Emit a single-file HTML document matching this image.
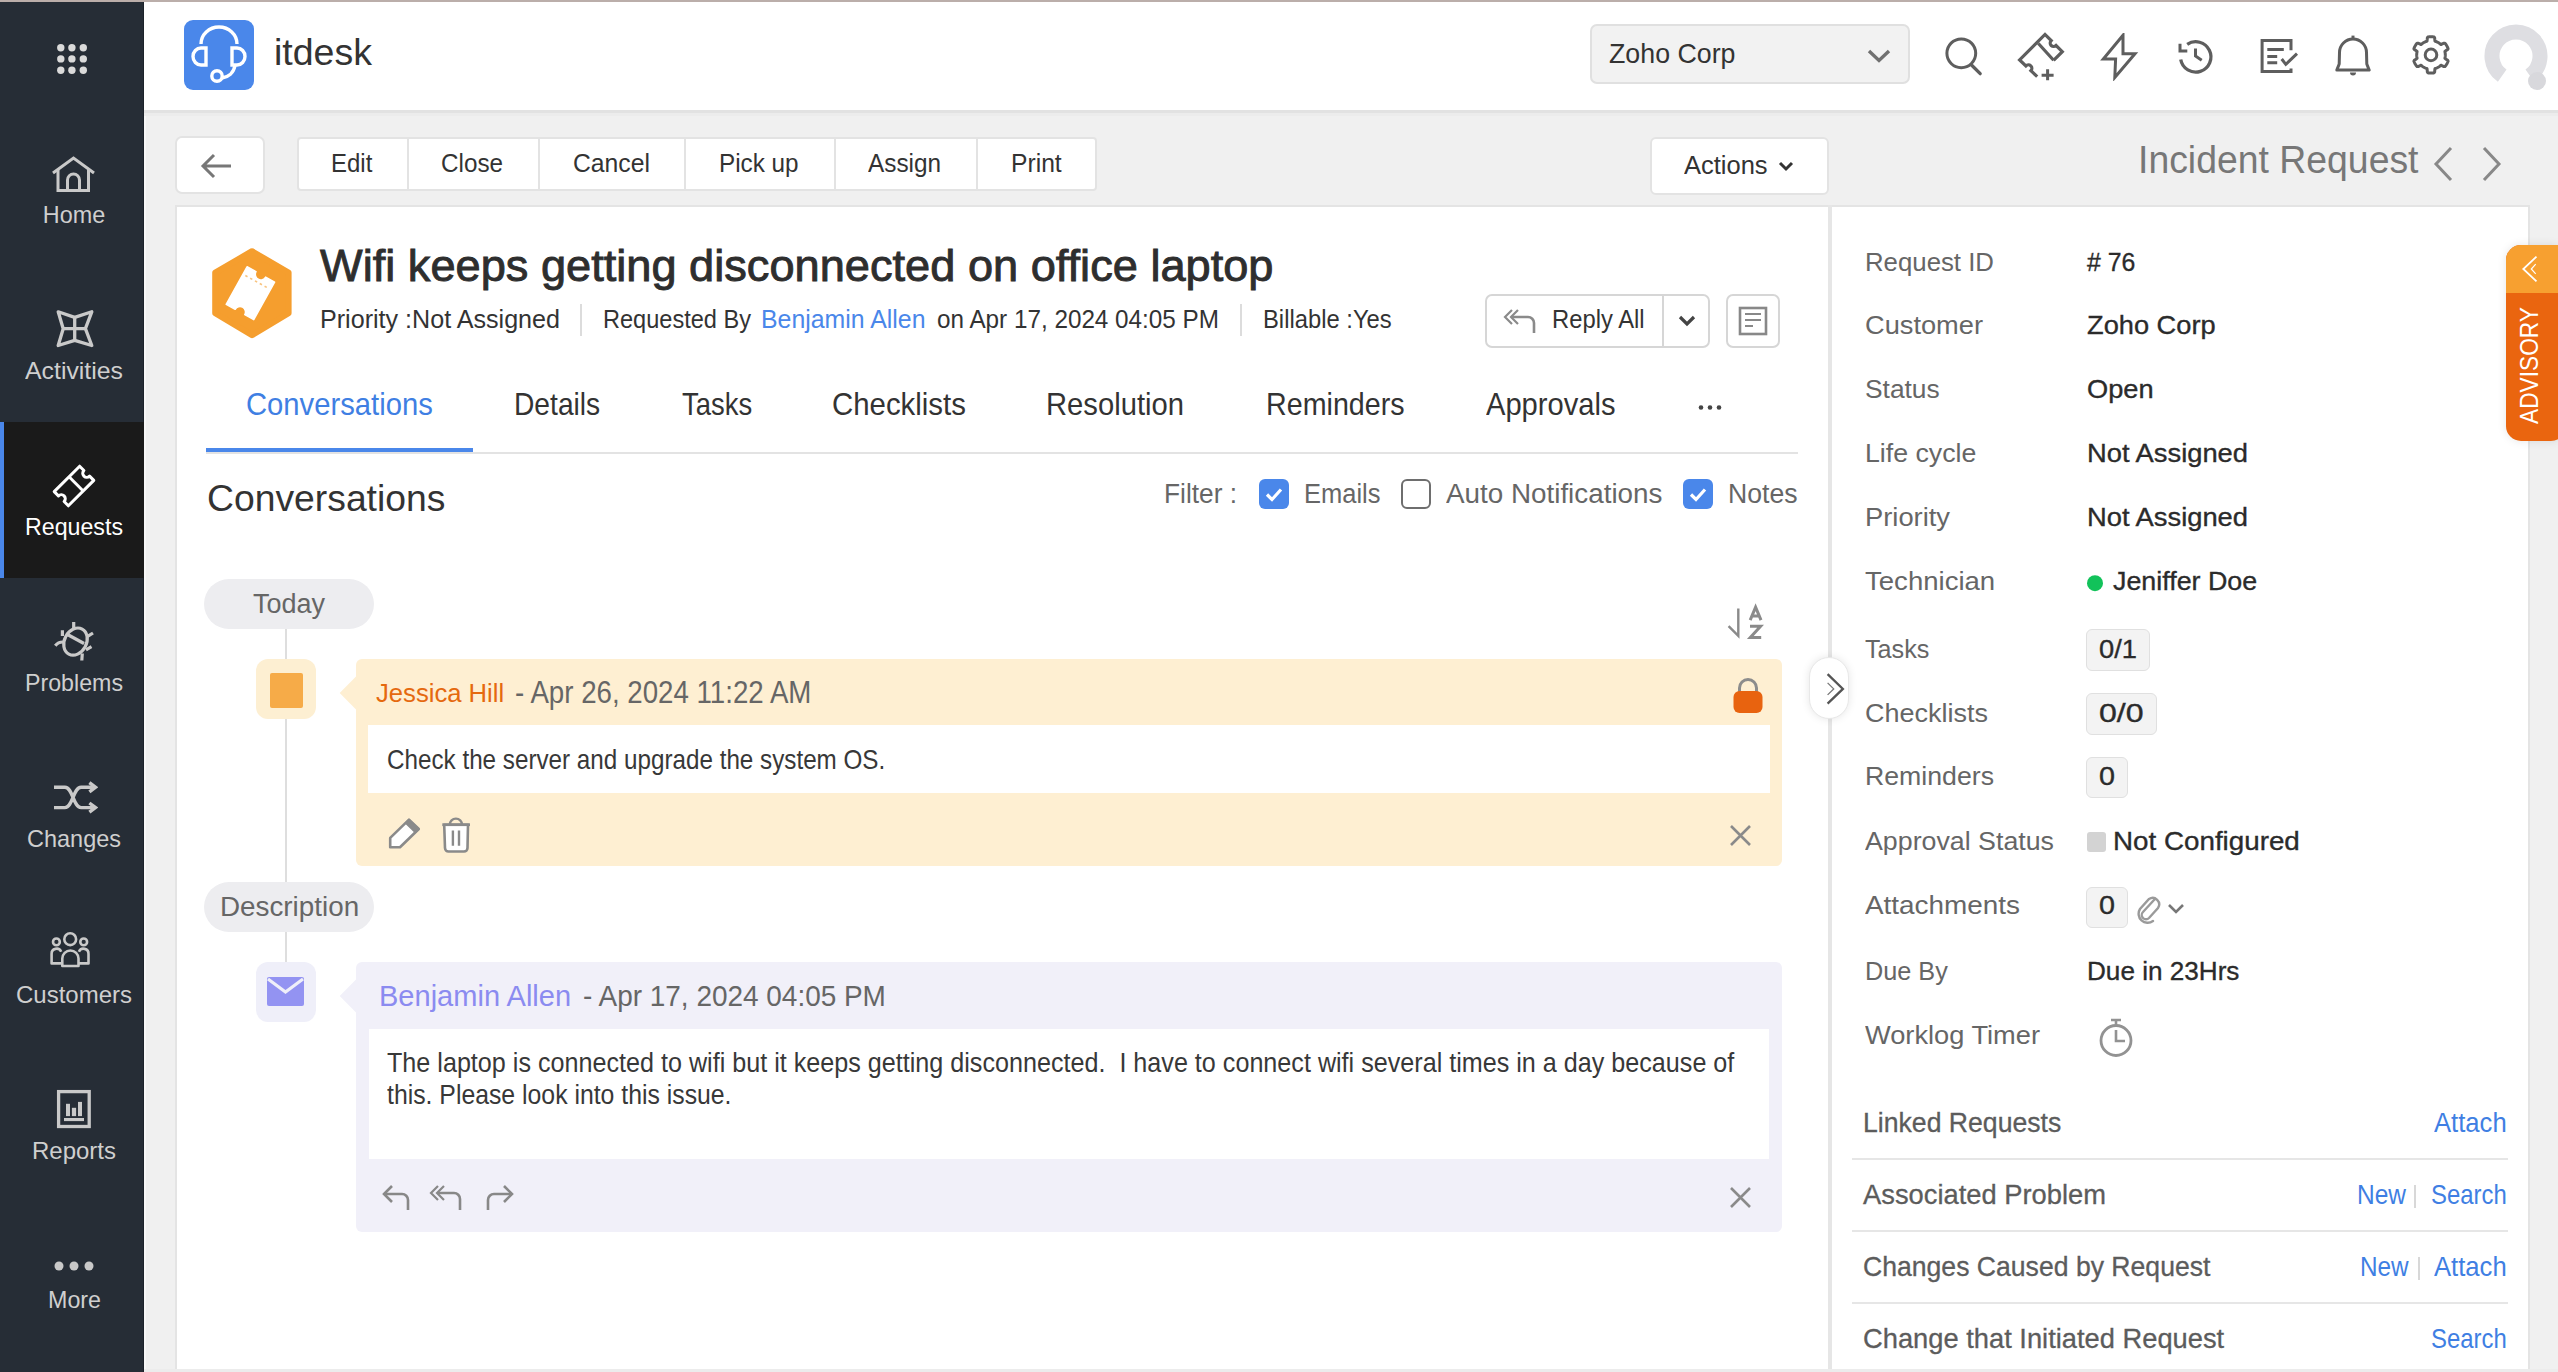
<!DOCTYPE html>
<html><head><meta charset="utf-8"><title>itdesk</title>
<style>
html,body{margin:0;padding:0;}
body{width:2558px;height:1372px;overflow:hidden;position:relative;background:#f0f0f0;font-family:"Liberation Sans",sans-serif;}
.t{position:absolute;white-space:nowrap;}
.r{position:absolute;box-sizing:border-box;}
</style></head><body>
<div class="r" style="left:0px;top:0px;width:144px;height:1372px;background:#262d36;border-radius:0px;"></div>
<div class="r" style="left:143px;top:0px;width:1px;height:1372px;background:#1c222a;border-radius:0px;"></div>
<div class="r" style="left:144px;top:110px;width:2px;height:1262px;background:#f7f7f7;border-radius:0px;"></div>
<div class="r" style="left:144px;top:0px;width:2414px;height:110px;background:#ffffff;border-radius:0px;"></div>
<div class="r" style="left:144px;top:110px;width:2414px;height:3px;background:#e2e2e2;border-radius:0px;"></div>
<div class="r" style="left:144px;top:113px;width:2414px;height:3px;background:#ececec;border-radius:0px;"></div>
<div class="r" style="left:0px;top:0px;width:2558px;height:2px;background:#bbaeaa;border-radius:0px;"></div>
<svg class="r" style="left:0px;top:0px;" width="144" height="100" viewBox="0 0 144 100"><circle cx="60.8" cy="47.7" r="3.7" fill="#dadada"/><circle cx="60.8" cy="58.9" r="3.7" fill="#dadada"/><circle cx="60.8" cy="70.2" r="3.7" fill="#dadada"/><circle cx="71.9" cy="47.7" r="3.7" fill="#dadada"/><circle cx="71.9" cy="58.9" r="3.7" fill="#dadada"/><circle cx="71.9" cy="70.2" r="3.7" fill="#dadada"/><circle cx="83.3" cy="47.7" r="3.7" fill="#dadada"/><circle cx="83.3" cy="58.9" r="3.7" fill="#dadada"/><circle cx="83.3" cy="70.2" r="3.7" fill="#dadada"/></svg>
<div class="r" style="left:0px;top:422px;width:144px;height:156px;background:#1a1a1a;border-radius:0px;"></div>
<div class="r" style="left:0px;top:422px;width:4px;height:156px;background:#4a87ea;border-radius:0px;"></div>
<div class="t" id="t0" style="left:42.80px;top:204.11px;font-size:23.4px;line-height:23.4px;color:#cfcfcf;font-weight:400;font-family:'Liberation Sans',sans-serif;transform-origin:left top;">Home</div>
<div class="t" id="t1" style="left:25.00px;top:360.11px;font-size:23.4px;line-height:23.4px;color:#cfcfcf;font-weight:400;font-family:'Liberation Sans',sans-serif;transform:scaleX(1.0618);transform-origin:left top;">Activities</div>
<div class="t" id="t2" style="left:25.00px;top:516.11px;font-size:23.4px;line-height:23.4px;color:#ffffff;font-weight:400;font-family:'Liberation Sans',sans-serif;transform:scaleX(0.9916);transform-origin:left top;">Requests</div>
<div class="t" id="t3" style="left:25.00px;top:672.11px;font-size:23.4px;line-height:23.4px;color:#cfcfcf;font-weight:400;font-family:'Liberation Sans',sans-serif;transform:scaleX(0.9919);transform-origin:left top;">Problems</div>
<div class="t" id="t4" style="left:27.00px;top:828.11px;font-size:23.4px;line-height:23.4px;color:#cfcfcf;font-weight:400;font-family:'Liberation Sans',sans-serif;transform:scaleX(1.0038);transform-origin:left top;">Changes</div>
<div class="t" id="t5" style="left:16.00px;top:984.11px;font-size:23.4px;line-height:23.4px;color:#cfcfcf;font-weight:400;font-family:'Liberation Sans',sans-serif;transform:scaleX(1.0257);transform-origin:left top;">Customers</div>
<div class="t" id="t6" style="left:32.00px;top:1140.11px;font-size:23.4px;line-height:23.4px;color:#cfcfcf;font-weight:400;font-family:'Liberation Sans',sans-serif;transform:scaleX(1.0256);transform-origin:left top;">Reports</div>
<div class="t" id="t7" style="left:47.50px;top:1289.11px;font-size:23.4px;line-height:23.4px;color:#cfcfcf;font-weight:400;font-family:'Liberation Sans',sans-serif;transform:scaleX(0.9944);transform-origin:left top;">More</div>
<svg class="r" style="left:50px;top:152px;" width="48" height="44" viewBox="0 0 48 44"><path d="M3 21 L23.5 6 L44 21" fill="none" stroke="#c9c9c9" stroke-width="3"/><path d="M8 17 V38.5 H38.5 V17" fill="none" stroke="#c9c9c9" stroke-width="3"/><path d="M17.5 38.5 V28 a6 6 0 0 1 12 0 V38.5" fill="none" stroke="#c9c9c9" stroke-width="3"/></svg>
<svg class="r" style="left:50px;top:305px;" width="48" height="46" viewBox="0 0 48 46"><path d="M8.2 6.8 L24.7 12.4 L41.8 6.8 L35.4 23.7 L41.8 40.5 L24.7 35.4 L8.2 40.5 L13.2 23.7 Z" fill="none" stroke="#c9c9c9" stroke-width="3.3" stroke-linejoin="round"/><path d="M13.2 23.7 H35.4 M24.7 12.4 V35.4" stroke="#c9c9c9" stroke-width="3.3"/></svg>
<svg class="r" style="left:50px;top:462px;" width="48" height="48" viewBox="0 0 48 48"><g transform="rotate(-45 24 24)"><path d="M6 14 H42 V20 a4 4 0 0 0 0 8 V34 H6 V28 a4 4 0 0 0 0 -8 Z" fill="none" stroke="#ffffff" stroke-width="3" stroke-linejoin="round"/><path d="M27 14 V34" stroke="#ffffff" stroke-width="3"/></g></svg>
<svg class="r" style="left:50px;top:618px;" width="48" height="46" viewBox="0 0 48 46"><ellipse cx="25.5" cy="23.6" rx="11" ry="14.2" transform="rotate(28 25.5 23.6)" fill="none" stroke="#c9c9c9" stroke-width="3.2"/><path d="M17.5 16.5 L34 25.5" stroke="#c9c9c9" stroke-width="3.2"/><path d="M23.7 4 V10.5 M12.4 12.2 V18 M5.3 27.7 Q8 24 13 24 M43 15 L37.2 18.7 M41.5 28.7 L36 31.8 M31.8 42.5 L32.3 35.5" fill="none" stroke="#c9c9c9" stroke-width="3.2"/></svg>
<svg class="r" style="left:50px;top:780px;" width="48" height="36" viewBox="0 0 48 36"><path d="M4 7.3 H14.9 C23 7.3 23 27.6 31.1 27.6 H44 M4 27.6 H14.9 C23 27.6 23 7.3 31.1 7.3 H44" fill="none" stroke="#c9c9c9" stroke-width="3.4"/><path d="M39.4 2.7 L45.5 7.3 L39.4 11.9 M39.4 23 L45.5 27.6 L39.4 32.2" fill="none" stroke="#c9c9c9" stroke-width="3.4"/></svg>
<svg class="r" style="left:40px;top:920px;" width="60" height="60" viewBox="0 0 60 60"><circle cx="30.2" cy="19.2" r="5.9" fill="none" stroke="#c9c9c9" stroke-width="2.6"/><circle cx="16.4" cy="21.9" r="3.4" fill="none" stroke="#c9c9c9" stroke-width="2.6"/><circle cx="43.7" cy="21.9" r="3.4" fill="none" stroke="#c9c9c9" stroke-width="2.6"/><path d="M22.3 46 V38.6 a8.1 8.1 0 0 1 16.2 0 V46 Z" fill="none" stroke="#c9c9c9" stroke-width="2.6" stroke-linejoin="round"/><path d="M22 43.4 H11.6 V34 a5 5 0 0 1 9.6 -2.2 M38.8 43.4 H48.5 V34 a5 5 0 0 0 -9.6 -2.2" fill="none" stroke="#c9c9c9" stroke-width="2.6" stroke-linejoin="round"/></svg>
<svg class="r" style="left:50px;top:1080px;" width="50" height="50" viewBox="0 0 50 50"><rect x="8.6" y="11.6" width="30.6" height="34.9" fill="none" stroke="#c9c9c9" stroke-width="3.3"/><rect x="16" y="23.8" width="4" height="12.3" fill="#c9c9c9"/><rect x="21.9" y="27.8" width="4.2" height="8.3" fill="#c9c9c9"/><rect x="28" y="21.9" width="4" height="14.2" fill="#c9c9c9"/><rect x="14" y="38" width="20" height="3.1" fill="#c9c9c9"/></svg>
<svg class="r" style="left:50px;top:1256px;" width="48" height="20" viewBox="0 0 48 20"><circle cx="9" cy="10" r="4.5" fill="#c9c9c9"/><circle cx="24" cy="10" r="4.5" fill="#c9c9c9"/><circle cx="39" cy="10" r="4.5" fill="#c9c9c9"/></svg>
<div class="r" style="left:184px;top:20px;width:70px;height:70px;background:#4a87ea;border-radius:9px;"></div>
<svg class="r" style="left:184px;top:20px;" width="70" height="70" viewBox="0 0 70 70"><path d="M17 24 a18 17 0 0 1 36 0" fill="none" stroke="#fff" stroke-width="3.4"/><path d="M22 28 H17 a8 8.5 0 0 0 0 17 H22 Z" fill="none" stroke="#fff" stroke-width="3.4"/><path d="M48 28 H53 a8 8.5 0 0 1 0 17 H48 Z" fill="none" stroke="#fff" stroke-width="3.4"/><path d="M51 45 C50 53 44 57 38 58" fill="none" stroke="#fff" stroke-width="3.4"/><circle cx="33" cy="56" r="5.2" fill="none" stroke="#fff" stroke-width="3.4"/></svg>
<div class="t" id="t8" style="left:274px;top:33.55px;font-size:37px;line-height:37px;color:#333333;font-weight:400;font-family:'Liberation Sans',sans-serif;transform:scaleX(1.0139);transform-origin:left top;">itdesk</div>
<div class="r" style="left:1590px;top:24px;width:320px;height:60px;background:#f2f2f2;border:2px solid #e0e0e0;border-radius:7px;"></div>
<div class="t" id="t9" style="left:1609px;top:39.80px;font-size:28px;line-height:28px;color:#333;font-weight:400;font-family:'Liberation Sans',sans-serif;transform:scaleX(0.9562);transform-origin:left top;">Zoho Corp</div>
<svg class="r" style="left:1864px;top:46px;" width="30" height="20" viewBox="0 0 30 20"><path d="M5 5 L15 14.5 L25 5" fill="none" stroke="#707070" stroke-width="3.4"/></svg>
<svg class="r" style="left:1940px;top:34px;" width="46" height="46" viewBox="0 0 46 46"><circle cx="21.3" cy="19.3" r="14.4" fill="none" stroke="#5e5e5e" stroke-width="3"/><path d="M31.5 31 L40.2 39.7" stroke="#5e5e5e" stroke-width="3.3" stroke-linecap="round"/></svg>
<svg class="r" style="left:2015px;top:32px;" width="52" height="50" viewBox="0 0 52 50"><path d="M22.2 44.7 L15.9 38.7 A3.3 3.3 0 0 0 10.9 33.9 L4.6 27.9 L30 2.4 L36.2 8.6 A3.4 3.4 0 0 0 41.1 13.5 L47.3 19.7 L38.6 28.3 M23.4 11.5 L38.6 28.3" fill="none" stroke="#5e5e5e" stroke-width="3.2"/><path d="M32.6 37.2 V48.2 M26.6 43.2 H38.6" stroke="#5e5e5e" stroke-width="3"/></svg>
<svg class="r" style="left:2098px;top:33px;" width="42" height="48" viewBox="0 0 42 48"><path d="M25 2.3 L5.3 26.1 H17.6 L16.8 44.5 L37 20.7 H25 Z" fill="none" stroke="#5e5e5e" stroke-width="3" stroke-linejoin="miter"/></svg>
<svg class="r" style="left:2174px;top:36px;" width="44" height="42" viewBox="0 0 44 42"><path d="M13.2 8.3 A15.2 15.2 0 1 1 6.73 23.54" fill="none" stroke="#5e5e5e" stroke-width="3.3"/><path d="M6 7.8 V15.1 H13.3" fill="none" stroke="#5e5e5e" stroke-width="3"/><path d="M21.5 12.5 V20 L27.7 24.2" fill="none" stroke="#5e5e5e" stroke-width="3"/></svg>
<svg class="r" style="left:2255px;top:35px;" width="46" height="42" viewBox="0 0 46 42"><path d="M36 15.2 V5.6 H7.1 V36.6 H36 V33.4" fill="none" stroke="#5e5e5e" stroke-width="3"/><path d="M12.3 14.4 H28.8 M12.3 21.4 H22.2 M12.3 27.8 H22.2" stroke="#5e5e5e" stroke-width="3"/><path d="M26.7 24 L30.8 29.3 L42 18.7" fill="none" stroke="#5e5e5e" stroke-width="3"/></svg>
<svg class="r" style="left:2332px;top:33px;" width="44" height="48" viewBox="0 0 44 48"><path d="M4.8 37.1 L7.2 31 L7.5 19.6 A13.5 13.5 0 0 1 34.5 19.6 L34.8 31 L37.2 37.1 Z" fill="none" stroke="#5e5e5e" stroke-width="3" stroke-linejoin="round"/><path d="M21 2.6 V6.5" stroke="#5e5e5e" stroke-width="3"/><path d="M18 39.6 A3 3 0 0 0 24 39.6 Z" fill="#5e5e5e"/></svg>
<svg class="r" style="left:2410px;top:34px;" width="42" height="42" viewBox="0 0 42 42"><polygon points="35.30,20.90 35.29,21.40 35.27,21.90 35.22,22.39 35.16,22.89 35.08,23.38 34.99,23.87 34.93,24.37 36.10,25.23 37.66,26.31 38.10,27.12 37.87,27.72 37.63,28.30 37.36,28.88 37.07,29.44 36.76,30.00 36.43,30.54 36.09,31.08 35.72,31.60 35.34,32.11 34.94,32.60 34.02,32.62 32.30,31.82 30.97,31.23 30.57,31.53 30.19,31.85 29.80,32.17 29.41,32.47 29.00,32.76 28.58,33.03 28.15,33.28 27.71,33.53 27.27,33.75 26.82,33.96 26.36,34.16 25.89,34.34 25.42,34.50 24.96,34.70 24.80,36.15 24.64,38.04 24.16,38.82 23.53,38.92 22.90,39.00 22.27,39.06 21.64,39.09 21.00,39.10 20.36,39.09 19.73,39.06 19.10,39.00 18.47,38.92 17.84,38.82 17.36,38.04 17.20,36.15 17.04,34.70 16.58,34.50 16.11,34.34 15.64,34.16 15.18,33.96 14.73,33.75 14.29,33.53 13.85,33.28 13.42,33.03 13.00,32.76 12.59,32.47 12.20,32.17 11.81,31.85 11.43,31.53 11.03,31.23 9.70,31.82 7.98,32.62 7.06,32.60 6.66,32.11 6.28,31.60 5.91,31.08 5.57,30.54 5.24,30.00 4.93,29.44 4.64,28.88 4.37,28.30 4.13,27.72 3.90,27.12 4.34,26.31 5.90,25.23 7.07,24.37 7.01,23.87 6.92,23.38 6.84,22.89 6.78,22.39 6.73,21.90 6.71,21.40 6.70,20.90 6.71,20.40 6.73,19.90 6.78,19.41 6.84,18.91 6.92,18.42 7.01,17.93 7.07,17.43 5.90,16.57 4.34,15.49 3.90,14.68 4.13,14.08 4.37,13.50 4.64,12.92 4.93,12.36 5.24,11.80 5.57,11.26 5.91,10.72 6.28,10.20 6.66,9.69 7.06,9.20 7.98,9.18 9.70,9.98 11.03,10.57 11.43,10.27 11.81,9.95 12.20,9.63 12.59,9.33 13.00,9.04 13.42,8.77 13.85,8.52 14.29,8.27 14.73,8.05 15.18,7.84 15.64,7.64 16.11,7.46 16.58,7.30 17.04,7.10 17.20,5.65 17.36,3.76 17.84,2.98 18.47,2.88 19.10,2.80 19.73,2.74 20.36,2.71 21.00,2.70 21.64,2.71 22.27,2.74 22.90,2.80 23.53,2.88 24.16,2.98 24.64,3.76 24.80,5.65 24.96,7.10 25.42,7.30 25.89,7.46 26.36,7.64 26.82,7.84 27.27,8.05 27.71,8.27 28.15,8.52 28.58,8.77 29.00,9.04 29.41,9.33 29.80,9.63 30.19,9.95 30.57,10.27 30.97,10.57 32.30,9.98 34.02,9.18 34.94,9.20 35.34,9.69 35.72,10.20 36.09,10.72 36.43,11.26 36.76,11.80 37.07,12.36 37.36,12.92 37.63,13.50 37.87,14.08 38.10,14.68 37.66,15.49 36.10,16.57 34.93,17.43 34.99,17.93 35.08,18.42 35.16,18.91 35.22,19.41 35.27,19.90 35.29,20.40 35.30,20.90" fill="none" stroke="#5e5e5e" stroke-width="3" stroke-linejoin="round"/><circle cx="21" cy="20.9" r="5.8" fill="none" stroke="#5e5e5e" stroke-width="3"/></svg>
<svg class="r" style="left:2480px;top:10px;" width="78" height="90" viewBox="0 0 78 90"><path d="M22.2 65.7 A24 24 0 1 1 49.8 65.7" fill="none" stroke="#dedee2" stroke-width="15"/><circle cx="57" cy="71" r="9" fill="#d8d8dc"/></svg>
<div class="r" style="left:175px;top:136px;width:90px;height:58px;background:#fff;border:2px solid #e3e3e3;border-radius:7px;"></div>
<svg class="r" style="left:195px;top:150px;" width="50" height="32" viewBox="0 0 50 32"><path d="M36 16 H8 M19 5 L8 16 L19 27" fill="none" stroke="#777" stroke-width="3"/></svg>
<div class="r" style="left:297px;top:137px;width:800px;height:54px;background:#fff;border:2px solid #e3e3e3;border-radius:4px;"></div>
<div class="r" style="left:407px;top:137px;width:2px;height:54px;background:#e3e3e3;border-radius:0px;"></div>
<div class="r" style="left:538px;top:137px;width:2px;height:54px;background:#e3e3e3;border-radius:0px;"></div>
<div class="r" style="left:684px;top:137px;width:2px;height:54px;background:#e3e3e3;border-radius:0px;"></div>
<div class="r" style="left:834px;top:137px;width:2px;height:54px;background:#e3e3e3;border-radius:0px;"></div>
<div class="r" style="left:976px;top:137px;width:2px;height:54px;background:#e3e3e3;border-radius:0px;"></div>
<div class="t" id="t10" style="left:330.7px;top:150.82px;font-size:25.5px;line-height:25.5px;color:#333;font-weight:400;font-family:'Liberation Sans',sans-serif;transform:scaleX(0.9396);transform-origin:left top;">Edit</div>
<div class="t" id="t11" style="left:441px;top:150.82px;font-size:25.5px;line-height:25.5px;color:#333;font-weight:400;font-family:'Liberation Sans',sans-serif;transform:scaleX(0.9509);transform-origin:left top;">Close</div>
<div class="t" id="t12" style="left:572.8px;top:150.82px;font-size:25.5px;line-height:25.5px;color:#333;font-weight:400;font-family:'Liberation Sans',sans-serif;transform:scaleX(0.9699);transform-origin:left top;">Cancel</div>
<div class="t" id="t13" style="left:719px;top:150.82px;font-size:25.5px;line-height:25.5px;color:#333;font-weight:400;font-family:'Liberation Sans',sans-serif;transform:scaleX(0.9519);transform-origin:left top;">Pick up</div>
<div class="t" id="t14" style="left:868px;top:150.82px;font-size:25.5px;line-height:25.5px;color:#333;font-weight:400;font-family:'Liberation Sans',sans-serif;transform:scaleX(0.9537);transform-origin:left top;">Assign</div>
<div class="t" id="t15" style="left:1011px;top:150.82px;font-size:25.5px;line-height:25.5px;color:#333;font-weight:400;font-family:'Liberation Sans',sans-serif;transform:scaleX(0.9669);transform-origin:left top;">Print</div>
<div class="r" style="left:1650px;top:137px;width:179px;height:58px;background:#fff;border:2px solid #e3e3e3;border-radius:6px;"></div>
<div class="t" id="t16" style="left:1684px;top:151.50px;font-size:26px;line-height:26px;color:#333;font-weight:400;font-family:'Liberation Sans',sans-serif;transform:scaleX(0.9805);transform-origin:left top;">Actions</div>
<svg class="r" style="left:1776px;top:158px;" width="20" height="16" viewBox="0 0 20 16"><path d="M4 5 L10 11 L16 5" fill="none" stroke="#333" stroke-width="3"/></svg>
<div class="t" id="t17" style="left:2137.5px;top:140.50px;font-size:38px;line-height:38px;color:#777777;font-weight:400;font-family:'Liberation Sans',sans-serif;transform:scaleX(0.9836);transform-origin:left top;">Incident Request</div>
<svg class="r" style="left:2428px;top:144px;" width="30" height="40" viewBox="0 0 30 40"><path d="M23 4 L8 20 L23 36" fill="none" stroke="#888" stroke-width="3"/></svg>
<svg class="r" style="left:2477px;top:144px;" width="30" height="40" viewBox="0 0 30 40"><path d="M7 4 L22 20 L7 36" fill="none" stroke="#888" stroke-width="3"/></svg>
<div class="r" style="left:175px;top:205px;width:1657px;height:1200px;background:#ffffff;border:2px solid #e4e4e4;border-radius:0px;"></div>
<div class="r" style="left:1828px;top:205px;width:702px;height:1200px;background:#ffffff;border:2px solid #e4e4e4;border-radius:0px;"></div>
<div class="r" style="left:1828px;top:205px;width:4px;height:1200px;background:#e6e6e6;border-radius:0px;"></div>
<svg class="r" style="left:205px;top:243px;" width="95" height="100" viewBox="0 0 95 100"><path d="M47 8.2 L83.6 29.6 V70.2 L47 92.3 L10.2 70.2 V29.6 Z" fill="#f59e2e" stroke="#f59e2e" stroke-width="6" stroke-linejoin="round"/><g transform="translate(45.4 50.2) rotate(29)"><path d="M-15.75 -21.5 H-5.5 A5.5 5.5 0 0 0 5.5 -21.5 H15.75 V21.5 H5.5 A5.5 5.5 0 0 0 -5.5 21.5 H-15.75 Z" fill="#ffffff" stroke="#ffffff" stroke-width="1.5" stroke-linejoin="round"/><path d="M-13 -13 H13" stroke="#f8c480" stroke-width="1.6" stroke-dasharray="2.5 3"/></g></svg>
<div class="t" id="t18" style="left:319.5px;top:243.97px;font-size:43.8px;line-height:43.8px;color:#2e2e2e;font-weight:400;font-family:'Liberation Sans',sans-serif;transform:scaleX(1.0315);transform-origin:left top;-webkit-text-stroke:0.9px #2e2e2e;">Wifi keeps getting disconnected on office laptop</div>
<div class="t" id="t19" style="left:319.5px;top:305.90px;font-size:26px;line-height:26px;color:#333;font-weight:400;font-family:'Liberation Sans',sans-serif;transform:scaleX(0.9656);transform-origin:left top;">Priority :Not Assigned</div>
<div class="r" style="left:580px;top:304px;width:2px;height:32px;background:#dcdcdc;border-radius:0px;"></div>
<div class="t" id="t20" style="left:602.8px;top:305.90px;font-size:26px;line-height:26px;color:#333;font-weight:400;font-family:'Liberation Sans',sans-serif;transform:scaleX(0.9062);transform-origin:left top;">Requested By</div>
<div class="t" id="t21" style="left:761px;top:305.90px;font-size:26px;line-height:26px;color:#4a87ea;font-weight:400;font-family:'Liberation Sans',sans-serif;transform:scaleX(0.9564);transform-origin:left top;">Benjamin Allen</div>
<div class="t" id="t22" style="left:936.7px;top:305.90px;font-size:26px;line-height:26px;color:#333;font-weight:400;font-family:'Liberation Sans',sans-serif;transform:scaleX(0.9334);transform-origin:left top;">on Apr 17, 2024 04:05 PM</div>
<div class="r" style="left:1240px;top:304px;width:2px;height:32px;background:#dcdcdc;border-radius:0px;"></div>
<div class="t" id="t23" style="left:1262.9px;top:305.90px;font-size:26px;line-height:26px;color:#333;font-weight:400;font-family:'Liberation Sans',sans-serif;transform:scaleX(0.9147);transform-origin:left top;">Billable :Yes</div>
<div class="r" style="left:1485px;top:294px;width:225px;height:54px;background:#fff;border:2px solid #d6d6d6;border-radius:7px;"></div>
<div class="r" style="left:1662px;top:295px;width:2px;height:52px;background:#d6d6d6;border-radius:0px;"></div>
<svg class="r" style="left:1500px;top:305px;" width="40" height="32" viewBox="0 0 40 32"><path d="M12 5 L5 12 L12 19 M18 5 L11 12 L18 19" fill="none" stroke="#8a8a8a" stroke-width="2.2"/><path d="M12 12 H28 a6 6 0 0 1 6 6 V28" fill="none" stroke="#8a8a8a" stroke-width="2.6"/></svg>
<div class="t" id="t24" style="left:1552.4px;top:307.05px;font-size:25.7px;line-height:25.7px;color:#333;font-weight:400;font-family:'Liberation Sans',sans-serif;transform:scaleX(0.9264);transform-origin:left top;">Reply All</div>
<svg class="r" style="left:1676px;top:313px;" width="22" height="16" viewBox="0 0 22 16"><path d="M4 4 L11 11 L18 4" fill="none" stroke="#444" stroke-width="3.2"/></svg>
<div class="r" style="left:1726px;top:294px;width:54px;height:54px;background:#fff;border:2px solid #d6d6d6;border-radius:7px;"></div>
<svg class="r" style="left:1736px;top:304px;" width="34" height="34" viewBox="0 0 34 34"><rect x="4" y="4" width="26" height="26" fill="none" stroke="#888" stroke-width="2.6"/><path d="M9 10 H25 M9 16 H25 M9 22 H17" stroke="#888" stroke-width="2.2"/></svg>
<div class="t" id="t25" style="left:246px;top:388.68px;font-size:30.5px;line-height:30.5px;color:#3f7fe3;font-weight:400;font-family:'Liberation Sans',sans-serif;transform:scaleX(0.9581);transform-origin:left top;">Conversations</div>
<div class="t" id="t26" style="left:513.8px;top:388.68px;font-size:30.5px;line-height:30.5px;color:#333;font-weight:400;font-family:'Liberation Sans',sans-serif;transform:scaleX(0.9246);transform-origin:left top;">Details</div>
<div class="t" id="t27" style="left:681.6px;top:388.68px;font-size:30.5px;line-height:30.5px;color:#333;font-weight:400;font-family:'Liberation Sans',sans-serif;transform:scaleX(0.8991);transform-origin:left top;">Tasks</div>
<div class="t" id="t28" style="left:831.7px;top:388.68px;font-size:30.5px;line-height:30.5px;color:#333;font-weight:400;font-family:'Liberation Sans',sans-serif;transform:scaleX(0.9634);transform-origin:left top;">Checklists</div>
<div class="t" id="t29" style="left:1046px;top:388.68px;font-size:30.5px;line-height:30.5px;color:#333;font-weight:400;font-family:'Liberation Sans',sans-serif;transform:scaleX(0.9575);transform-origin:left top;">Resolution</div>
<div class="t" id="t30" style="left:1265.7px;top:388.68px;font-size:30.5px;line-height:30.5px;color:#333;font-weight:400;font-family:'Liberation Sans',sans-serif;transform:scaleX(0.9399);transform-origin:left top;">Reminders</div>
<div class="t" id="t31" style="left:1486px;top:388.68px;font-size:30.5px;line-height:30.5px;color:#333;font-weight:400;font-family:'Liberation Sans',sans-serif;transform:scaleX(0.9547);transform-origin:left top;">Approvals</div>
<svg class="r" style="left:1694px;top:398px;" width="32" height="14" viewBox="0 0 32 14"><circle cx="7" cy="9.5" r="2.3" fill="#444"/><circle cx="16" cy="9.5" r="2.3" fill="#444"/><circle cx="25" cy="9.5" r="2.3" fill="#444"/></svg>
<div class="r" style="left:206px;top:452px;width:1592px;height:2px;background:#e3e3e3;border-radius:0px;"></div>
<div class="r" style="left:206px;top:448px;width:267px;height:4px;background:#4a87ea;border-radius:0px;"></div>
<div class="t" id="t32" style="left:207px;top:479.55px;font-size:37px;line-height:37px;color:#333;font-weight:400;font-family:'Liberation Sans',sans-serif;transform:scaleX(1.0080);transform-origin:left top;">Conversations</div>
<div class="t" id="t33" style="left:1163.7px;top:480.85px;font-size:27px;line-height:27px;color:#666;font-weight:400;font-family:'Liberation Sans',sans-serif;transform:scaleX(0.9731);transform-origin:left top;">Filter :</div>
<svg class="r" style="left:1259px;top:479px;" width="30" height="30" viewBox="0 0 30 30"><rect x="0" y="0" width="30" height="30" rx="6" fill="#4a87ea"/><path d="M8 15.5 L13 20.5 L22 10.5" fill="none" stroke="#fff" stroke-width="3.2"/></svg>
<div class="t" id="t34" style="left:1303.5px;top:480.85px;font-size:27px;line-height:27px;color:#666;font-weight:400;font-family:'Liberation Sans',sans-serif;transform:scaleX(0.9443);transform-origin:left top;">Emails</div>
<svg class="r" style="left:1401px;top:479px;" width="30" height="30" viewBox="0 0 30 30"><rect x="1" y="1" width="28" height="28" rx="5" fill="#fff" stroke="#6e6e6e" stroke-width="2"/></svg>
<div class="t" id="t35" style="left:1445.9px;top:480.85px;font-size:27px;line-height:27px;color:#666;font-weight:400;font-family:'Liberation Sans',sans-serif;transform:scaleX(1.0299);transform-origin:left top;">Auto Notifications</div>
<svg class="r" style="left:1683px;top:479px;" width="30" height="30" viewBox="0 0 30 30"><rect x="0" y="0" width="30" height="30" rx="6" fill="#4a87ea"/><path d="M8 15.5 L13 20.5 L22 10.5" fill="none" stroke="#fff" stroke-width="3.2"/></svg>
<div class="t" id="t36" style="left:1727.5px;top:480.85px;font-size:27px;line-height:27px;color:#666;font-weight:400;font-family:'Liberation Sans',sans-serif;transform:scaleX(0.9852);transform-origin:left top;">Notes</div>
<svg class="r" style="left:1722px;top:602px;" width="44" height="42" viewBox="0 0 44 42"><path d="M16.3 6.4 V33.9 L6.6 24.2" fill="none" stroke="#8a8a8a" stroke-width="2.4"/><path d="M28.2 18.1 L33.6 5.2 L39 18.1 M29.8 14 H37.4" fill="none" stroke="#8a8a8a" stroke-width="3"/><path d="M28 24.2 H38.6 L28.3 35.5 H39.2" fill="none" stroke="#8a8a8a" stroke-width="3"/></svg>
<div class="r" style="left:285px;top:628px;width:2px;height:31px;background:#dedede;border-radius:0px;"></div>
<div class="r" style="left:285px;top:719px;width:2px;height:163px;background:#dedede;border-radius:0px;"></div>
<div class="r" style="left:285px;top:931px;width:2px;height:31px;background:#dedede;border-radius:0px;"></div>
<div class="r" style="left:204px;top:579px;width:170px;height:50px;background:#ededf0;border-radius:25px;"></div>
<div class="t" id="t37" style="left:253px;top:590.55px;font-size:27px;line-height:27px;color:#666;font-weight:400;font-family:'Liberation Sans',sans-serif;transform-origin:left top;">Today</div>
<div class="r" style="left:256px;top:659px;width:60px;height:60px;background:#fdefd2;border-radius:12px;"></div>
<div class="r" style="left:269.6px;top:672.6px;width:33px;height:35px;background:#f6ab48;border-radius:2px;"></div>
<svg class="r" style="left:338px;top:675px;" width="20" height="36" viewBox="0 0 20 36"><path d="M18 1.6 L1.7 18 L18 34.4 Z" fill="#feefd2"/></svg>
<div class="r" style="left:356px;top:659px;width:1426px;height:207px;background:#feefd2;border-radius:6px;"></div>
<div class="r" style="left:368px;top:725px;width:1402px;height:68px;background:#ffffff;border-radius:0px;"></div>
<div class="t" id="t38" style="left:375.5px;top:680.48px;font-size:26.5px;line-height:26.5px;color:#e5690f;font-weight:400;font-family:'Liberation Sans',sans-serif;transform:scaleX(0.9673);transform-origin:left top;">Jessica Hill</div>
<div class="t" id="t39" style="left:515px;top:677.08px;font-size:30.5px;line-height:30.5px;color:#666;font-weight:400;font-family:'Liberation Sans',sans-serif;transform:scaleX(0.9073);transform-origin:left top;">- Apr 26, 2024 11:22 AM</div>
<div class="t" id="t40" style="left:386.7px;top:746.12px;font-size:27.5px;line-height:27.5px;color:#383838;font-weight:400;font-family:'Liberation Sans',sans-serif;transform:scaleX(0.8810);transform-origin:left top;">Check the server and upgrade the system OS.</div>
<svg class="r" style="left:1730px;top:676px;" width="36" height="40" viewBox="0 0 36 40"><path d="M9.5 16 V12 a8.5 8.5 0 0 1 17 0 V16" fill="none" stroke="#8c8c8c" stroke-width="3"/><rect x="3.5" y="15" width="29" height="22" rx="6" fill="#e8630f"/></svg>
<svg class="r" style="left:380px;top:810px;" width="46" height="46" viewBox="0 0 46 46"><path d="M10.2 27.9 L29 9.6 L38.8 19 L20 37.3 H10.2 Z" fill="#ffffff" stroke="#8a8a8a" stroke-width="2.6" stroke-linejoin="round"/><path d="M29 9.6 L38.8 19 L35.3 22.4 L25.5 13 Z" fill="#8a8a8a" stroke="#8a8a8a" stroke-width="1.5" stroke-linejoin="round"/></svg>
<svg class="r" style="left:436px;top:810px;" width="40" height="46" viewBox="0 0 40 46"><path d="M8.2 14.7 L9 38 a3.5 3.5 0 0 0 3.5 3.5 H28 a3.5 3.5 0 0 0 3.5 -3.5 L32 14.7 Z" fill="#ffffff" stroke="#8a8a8a" stroke-width="2.6" stroke-linejoin="round"/><path d="M6.3 14.7 H34" stroke="#8a8a8a" stroke-width="2.8"/><path d="M13.8 14.7 A6.1 6.1 0 0 1 26 14.7" fill="none" stroke="#8a8a8a" stroke-width="2.4"/><path d="M16.9 20.4 V35.8 M23 20.4 V35.8" stroke="#8a8a8a" stroke-width="2.4"/></svg>
<svg class="r" style="left:1726px;top:820px;" width="30" height="30" viewBox="0 0 30 30"><path d="M5 6 L24 25 M24 6 L5 25" stroke="#8a8a8a" stroke-width="2.6"/></svg>
<div class="r" style="left:1809px;top:657px;width:40px;height:62px;background:#ffffff;border:1px solid #e8e8e8;border-radius:20px;box-shadow:0 0 8px rgba(0,0,0,0.10);"></div>
<svg class="r" style="left:1816px;top:672px;" width="30" height="34" viewBox="0 0 30 34"><path d="M11.6 2.2 L26.9 16.9 L11.6 31.6" fill="none" stroke="#555" stroke-width="2.3"/><path d="M11.6 10.9 L17.7 16.9 L11.6 22.9" fill="none" stroke="#777" stroke-width="1.3"/></svg>
<div class="r" style="left:204px;top:882px;width:170px;height:50px;background:#ededf0;border-radius:25px;"></div>
<div class="t" id="t41" style="left:219.5px;top:893.85px;font-size:27px;line-height:27px;color:#666;font-weight:400;font-family:'Liberation Sans',sans-serif;transform:scaleX(1.0299);transform-origin:left top;">Description</div>
<div class="r" style="left:256px;top:962px;width:60px;height:60px;background:#efeff9;border-radius:12px;"></div>
<svg class="r" style="left:266px;top:976px;" width="40" height="32" viewBox="0 0 40 32"><rect x="1" y="1" width="37" height="29" rx="2" fill="#9393f2"/><path d="M2 3 L19.5 16 L37 3" fill="none" stroke="#efeff9" stroke-width="3.2"/></svg>
<svg class="r" style="left:338px;top:978px;" width="20" height="36" viewBox="0 0 20 36"><path d="M18 1.6 L1.7 18 L18 34.4 Z" fill="#f1f0f9"/></svg>
<div class="r" style="left:356px;top:962px;width:1426px;height:270px;background:#f1f0f9;border-radius:6px;"></div>
<div class="r" style="left:369px;top:1029px;width:1400px;height:130px;background:#ffffff;border-radius:0px;"></div>
<div class="t" id="t42" style="left:378.7px;top:981.00px;font-size:30px;line-height:30px;color:#8b8bf0;font-weight:400;font-family:'Liberation Sans',sans-serif;transform:scaleX(0.9679);transform-origin:left top;">Benjamin Allen</div>
<div class="t" id="t43" style="left:582.5px;top:981.00px;font-size:30px;line-height:30px;color:#666;font-weight:400;font-family:'Liberation Sans',sans-serif;transform:scaleX(0.9314);transform-origin:left top;">- Apr 17, 2024 04:05 PM</div>
<div class="t" id="t44" style="left:386.7px;top:1048.62px;font-size:27.5px;line-height:27.5px;color:#383838;font-weight:400;font-family:'Liberation Sans',sans-serif;transform:scaleX(0.9143);transform-origin:left top;">The laptop is connected to wifi but it keeps getting disconnected.&nbsp; I have to connect wifi several times in a day because of</div>
<div class="t" id="t45" style="left:386.7px;top:1080.62px;font-size:27.5px;line-height:27.5px;color:#383838;font-weight:400;font-family:'Liberation Sans',sans-serif;transform:scaleX(0.9015);transform-origin:left top;">this. Please look into this issue.</div>
<svg class="r" style="left:380px;top:1182px;" width="36" height="32" viewBox="0 0 36 32"><path d="M12 4 L4 12 L12 20" fill="none" stroke="#888" stroke-width="2.6"/><path d="M4 12 H22 a6 6 0 0 1 6 6 V28" fill="none" stroke="#888" stroke-width="2.6"/></svg>
<svg class="r" style="left:428px;top:1182px;" width="38" height="32" viewBox="0 0 38 32"><path d="M10 4 L3 11 L10 18 M16 4 L9 11 L16 18" fill="none" stroke="#888" stroke-width="2.2"/><path d="M10 11 H26 a6 6 0 0 1 6 6 V28" fill="none" stroke="#888" stroke-width="2.6"/></svg>
<svg class="r" style="left:482px;top:1182px;" width="36" height="32" viewBox="0 0 36 32"><path d="M22 4 L30 12 L22 20" fill="none" stroke="#888" stroke-width="2.6"/><path d="M30 12 H12 a6 6 0 0 0 -6 6 V28" fill="none" stroke="#888" stroke-width="2.6"/></svg>
<svg class="r" style="left:1726px;top:1183px;" width="30" height="30" viewBox="0 0 30 30"><path d="M5 5 L24 24 M24 5 L5 24" stroke="#8a8a8a" stroke-width="2.6"/></svg>
<div class="t" id="t46" style="left:1864.8px;top:249.28px;font-size:26.5px;line-height:26.5px;color:#666666;font-weight:400;font-family:'Liberation Sans',sans-serif;transform:scaleX(0.9730);transform-origin:left top;">Request ID</div>
<div class="t" id="t47" style="left:1864.8px;top:312.38px;font-size:26.5px;line-height:26.5px;color:#666666;font-weight:400;font-family:'Liberation Sans',sans-serif;transform:scaleX(1.0272);transform-origin:left top;">Customer</div>
<div class="t" id="t48" style="left:1864.8px;top:375.98px;font-size:26.5px;line-height:26.5px;color:#666666;font-weight:400;font-family:'Liberation Sans',sans-serif;transform:scaleX(0.9941);transform-origin:left top;">Status</div>
<div class="t" id="t49" style="left:1864.8px;top:439.88px;font-size:26.5px;line-height:26.5px;color:#666666;font-weight:400;font-family:'Liberation Sans',sans-serif;transform:scaleX(1.0084);transform-origin:left top;">Life cycle</div>
<div class="t" id="t50" style="left:1864.8px;top:503.77px;font-size:26.5px;line-height:26.5px;color:#666666;font-weight:400;font-family:'Liberation Sans',sans-serif;transform:scaleX(1.0309);transform-origin:left top;">Priority</div>
<div class="t" id="t51" style="left:1864.8px;top:567.98px;font-size:26.5px;line-height:26.5px;color:#666666;font-weight:400;font-family:'Liberation Sans',sans-serif;transform:scaleX(1.0398);transform-origin:left top;">Technician</div>
<div class="t" id="t52" style="left:1864.8px;top:636.08px;font-size:26.5px;line-height:26.5px;color:#666666;font-weight:400;font-family:'Liberation Sans',sans-serif;transform:scaleX(0.9506);transform-origin:left top;">Tasks</div>
<div class="t" id="t53" style="left:1864.8px;top:699.77px;font-size:26.5px;line-height:26.5px;color:#666666;font-weight:400;font-family:'Liberation Sans',sans-serif;transform:scaleX(1.0185);transform-origin:left top;">Checklists</div>
<div class="t" id="t54" style="left:1864.8px;top:763.48px;font-size:26.5px;line-height:26.5px;color:#666666;font-weight:400;font-family:'Liberation Sans',sans-serif;transform:scaleX(1.0067);transform-origin:left top;">Reminders</div>
<div class="t" id="t55" style="left:1864.8px;top:828.18px;font-size:26.5px;line-height:26.5px;color:#666666;font-weight:400;font-family:'Liberation Sans',sans-serif;transform:scaleX(1.0102);transform-origin:left top;">Approval Status</div>
<div class="t" id="t56" style="left:1864.8px;top:892.48px;font-size:26.5px;line-height:26.5px;color:#666666;font-weight:400;font-family:'Liberation Sans',sans-serif;transform:scaleX(1.0523);transform-origin:left top;">Attachments</div>
<div class="t" id="t57" style="left:1864.8px;top:957.98px;font-size:26.5px;line-height:26.5px;color:#666666;font-weight:400;font-family:'Liberation Sans',sans-serif;transform:scaleX(0.9528);transform-origin:left top;">Due By</div>
<div class="t" id="t58" style="left:1864.8px;top:1021.68px;font-size:26.5px;line-height:26.5px;color:#666666;font-weight:400;font-family:'Liberation Sans',sans-serif;transform:scaleX(1.0274);transform-origin:left top;">Worklog Timer</div>
<div class="t" id="t59" style="left:2086.7px;top:249.28px;font-size:26.5px;line-height:26.5px;color:#2b2b2b;font-weight:400;font-family:'Liberation Sans',sans-serif;transform:scaleX(0.9364);transform-origin:left top;-webkit-text-stroke:0.35px #2b2b2b;"># 76</div>
<div class="t" id="t60" style="left:2086.7px;top:312.38px;font-size:26.5px;line-height:26.5px;color:#2b2b2b;font-weight:400;font-family:'Liberation Sans',sans-serif;transform:scaleX(1.0271);transform-origin:left top;-webkit-text-stroke:0.35px #2b2b2b;">Zoho Corp</div>
<div class="t" id="t61" style="left:2086.7px;top:375.98px;font-size:26.5px;line-height:26.5px;color:#2b2b2b;font-weight:400;font-family:'Liberation Sans',sans-serif;transform:scaleX(1.0273);transform-origin:left top;-webkit-text-stroke:0.35px #2b2b2b;">Open</div>
<div class="t" id="t62" style="left:2086.7px;top:439.88px;font-size:26.5px;line-height:26.5px;color:#2b2b2b;font-weight:400;font-family:'Liberation Sans',sans-serif;transform:scaleX(1.0310);transform-origin:left top;-webkit-text-stroke:0.35px #2b2b2b;">Not Assigned</div>
<div class="t" id="t63" style="left:2086.7px;top:503.77px;font-size:26.5px;line-height:26.5px;color:#2b2b2b;font-weight:400;font-family:'Liberation Sans',sans-serif;transform:scaleX(1.0310);transform-origin:left top;-webkit-text-stroke:0.35px #2b2b2b;">Not Assigned</div>
<svg class="r" style="left:2086px;top:574px;" width="18" height="18" viewBox="0 0 18 18"><circle cx="9" cy="9.2" r="8" fill="#12c25a"/></svg>
<div class="t" id="t64" style="left:2112.9px;top:567.98px;font-size:26.5px;line-height:26.5px;color:#2b2b2b;font-weight:400;font-family:'Liberation Sans',sans-serif;transform:scaleX(1.0126);transform-origin:left top;-webkit-text-stroke:0.35px #2b2b2b;">Jeniffer Doe</div>
<div class="r" style="left:2086px;top:629px;width:64px;height:42px;background:#f3f3f3;border:1.5px solid #e0e0e0;border-radius:6px;"></div>
<div class="t" id="t65" style="left:2099px;top:636.08px;font-size:26.5px;line-height:26.5px;color:#2b2b2b;font-weight:400;font-family:'Liberation Sans',sans-serif;transform:scaleX(1.0314);transform-origin:left top;-webkit-text-stroke:0.35px #2b2b2b;">0/1</div>
<div class="r" style="left:2086px;top:693px;width:71px;height:42px;background:#f3f3f3;border:1.5px solid #e0e0e0;border-radius:6px;"></div>
<div class="t" id="t66" style="left:2099px;top:699.77px;font-size:26.5px;line-height:26.5px;color:#2b2b2b;font-weight:400;font-family:'Liberation Sans',sans-serif;transform:scaleX(1.2105);transform-origin:left top;-webkit-text-stroke:0.35px #2b2b2b;">0/0</div>
<div class="r" style="left:2086px;top:757px;width:42px;height:41px;background:#f3f3f3;border:1.5px solid #e0e0e0;border-radius:6px;"></div>
<div class="t" id="t67" style="left:2099px;top:763.48px;font-size:26.5px;line-height:26.5px;color:#2b2b2b;font-weight:400;font-family:'Liberation Sans',sans-serif;transform:scaleX(1.0847);transform-origin:left top;-webkit-text-stroke:0.35px #2b2b2b;">0</div>
<div class="r" style="left:2086.6px;top:832.3px;width:19.5px;height:19.5px;background:#d3d3d3;border-radius:3px;"></div>
<div class="t" id="t68" style="left:2113.4px;top:828.18px;font-size:26.5px;line-height:26.5px;color:#2b2b2b;font-weight:400;font-family:'Liberation Sans',sans-serif;transform:scaleX(1.0480);transform-origin:left top;-webkit-text-stroke:0.35px #2b2b2b;">Not Configured</div>
<div class="r" style="left:2086px;top:887px;width:42px;height:41px;background:#f3f3f3;border:1.5px solid #e0e0e0;border-radius:6px;"></div>
<div class="t" id="t69" style="left:2099px;top:892.48px;font-size:26.5px;line-height:26.5px;color:#2b2b2b;font-weight:400;font-family:'Liberation Sans',sans-serif;transform:scaleX(1.0847);transform-origin:left top;-webkit-text-stroke:0.35px #2b2b2b;">0</div>
<svg class="r" style="left:2134px;top:892px;" width="30" height="32" viewBox="0 0 30 32"><path d="M20 8 L9 20 a4 4 0 0 0 6 6 L24 16 a6.5 6.5 0 0 0 -9 -9 L6 17 a9 9 0 0 0 13 12" fill="none" stroke="#9a9a9a" stroke-width="2.4" stroke-linecap="round"/></svg>
<svg class="r" style="left:2166px;top:902px;" width="20" height="14" viewBox="0 0 20 14"><path d="M3 3 L10 10 L17 3" fill="none" stroke="#777" stroke-width="2.6"/></svg>
<div class="t" id="t70" style="left:2086.7px;top:957.98px;font-size:26.5px;line-height:26.5px;color:#2b2b2b;font-weight:400;font-family:'Liberation Sans',sans-serif;transform:scaleX(0.9854);transform-origin:left top;-webkit-text-stroke:0.35px #2b2b2b;">Due in 23Hrs</div>
<svg class="r" style="left:2098px;top:1016px;" width="38" height="44" viewBox="0 0 38 44"><circle cx="18" cy="24.5" r="15" fill="none" stroke="#929292" stroke-width="2.8"/><path d="M13 4 H23 M18 4 V9" stroke="#929292" stroke-width="2.6"/><path d="M18 14 V25 H27" fill="none" stroke="#929292" stroke-width="2.6"/></svg>
<div class="t" id="t71" style="left:1862.7px;top:1109.12px;font-size:27.5px;line-height:27.5px;color:#5c5c5c;font-weight:400;font-family:'Liberation Sans',sans-serif;transform:scaleX(0.9680);transform-origin:left top;-webkit-text-stroke:0.3px #5c5c5c;">Linked Requests</div>
<div class="t" id="t72" style="left:2434px;top:1109.12px;font-size:27.5px;line-height:27.5px;color:#3f7fe3;font-weight:400;font-family:'Liberation Sans',sans-serif;transform:scaleX(0.9324);transform-origin:left top;">Attach</div>
<div class="r" style="left:1852px;top:1157.5px;width:656px;height:2px;background:#e6e6e6;border-radius:0px;"></div>
<div class="t" id="t73" style="left:1862.7px;top:1180.62px;font-size:27.5px;line-height:27.5px;color:#5c5c5c;font-weight:400;font-family:'Liberation Sans',sans-serif;transform:scaleX(0.9936);transform-origin:left top;-webkit-text-stroke:0.3px #5c5c5c;">Associated Problem</div>
<div class="t" id="t74" style="left:2356.6px;top:1180.62px;font-size:27.5px;line-height:27.5px;color:#3f7fe3;font-weight:400;font-family:'Liberation Sans',sans-serif;transform:scaleX(0.8907);transform-origin:left top;">New</div>
<div class="r" style="left:2414px;top:1185px;width:2px;height:23px;background:#d8d8d8;border-radius:0px;"></div>
<div class="t" id="t75" style="left:2431px;top:1180.62px;font-size:27.5px;line-height:27.5px;color:#3f7fe3;font-weight:400;font-family:'Liberation Sans',sans-serif;transform:scaleX(0.8687);transform-origin:left top;">Search</div>
<div class="r" style="left:1852px;top:1229.5px;width:656px;height:2px;background:#e6e6e6;border-radius:0px;"></div>
<div class="t" id="t76" style="left:1862.7px;top:1252.62px;font-size:27.5px;line-height:27.5px;color:#5c5c5c;font-weight:400;font-family:'Liberation Sans',sans-serif;transform:scaleX(0.9670);transform-origin:left top;-webkit-text-stroke:0.3px #5c5c5c;">Changes Caused by Request</div>
<div class="t" id="t77" style="left:2360px;top:1252.62px;font-size:27.5px;line-height:27.5px;color:#3f7fe3;font-weight:400;font-family:'Liberation Sans',sans-serif;transform:scaleX(0.8834);transform-origin:left top;">New</div>
<div class="r" style="left:2417.7px;top:1257px;width:2px;height:23px;background:#d8d8d8;border-radius:0px;"></div>
<div class="t" id="t78" style="left:2434px;top:1252.62px;font-size:27.5px;line-height:27.5px;color:#3f7fe3;font-weight:400;font-family:'Liberation Sans',sans-serif;transform:scaleX(0.9324);transform-origin:left top;">Attach</div>
<div class="r" style="left:1852px;top:1301.5px;width:656px;height:2px;background:#e6e6e6;border-radius:0px;"></div>
<div class="t" id="t79" style="left:1862.7px;top:1324.92px;font-size:27.5px;line-height:27.5px;color:#5c5c5c;font-weight:400;font-family:'Liberation Sans',sans-serif;transform:scaleX(0.9926);transform-origin:left top;-webkit-text-stroke:0.3px #5c5c5c;">Change that Initiated Request</div>
<div class="t" id="t80" style="left:2431px;top:1324.92px;font-size:27.5px;line-height:27.5px;color:#3f7fe3;font-weight:400;font-family:'Liberation Sans',sans-serif;transform:scaleX(0.8687);transform-origin:left top;">Search</div>
<div class="r" style="left:2506px;top:245px;width:60px;height:196px;background:#ea650f;border-radius:15px;box-shadow:0 0 10px rgba(0,0,0,0.10);"></div>
<div class="r" style="left:2506px;top:245px;width:60px;height:48px;background:#f7a030;border-radius:0px;border-radius:15px 0 0 0;"></div>
<svg class="r" style="left:2515px;top:250px;" width="30" height="38" viewBox="0 0 30 38"><path d="M21.5 6.6 L8.3 19 L21.5 31.4" fill="none" stroke="#fff" stroke-width="1.8"/><path d="M20.7 14.2 L16.3 19 L20.7 23.8" fill="none" stroke="#fff" stroke-width="1.2"/></svg>
<div class="t" style="left:2459.0px;top:353.0px;width:140px;text-align:center;font-size:25px;line-height:25px;color:#fff;font-family:'Liberation Sans',sans-serif;transform:rotate(-90deg) scaleX(0.907);transform-origin:center center;">ADVISORY</div>
<div class="r" style="left:144px;top:1369px;width:2414px;height:3px;background:#ececec;border-radius:0px;"></div>
</body></html>
